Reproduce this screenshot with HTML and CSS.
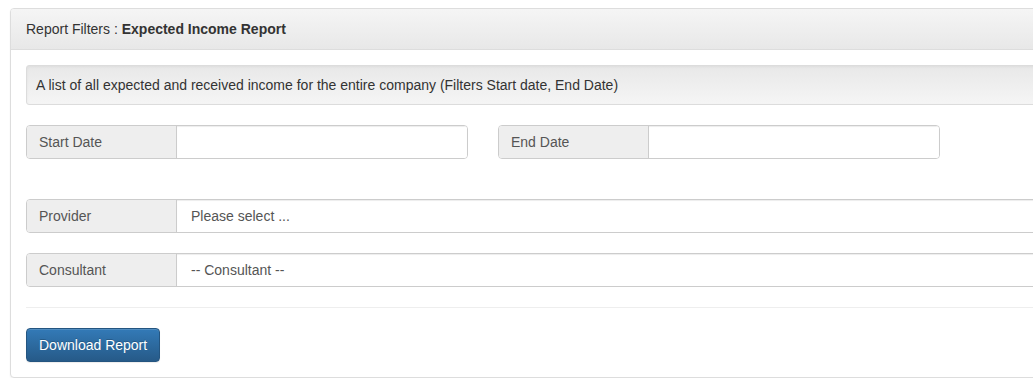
FILE: index.html
```html
<!DOCTYPE html>
<html>
<head>
<meta charset="utf-8">
<link rel="stylesheet" href="styles.css">
</head>
<body>
<div class="panel">
  <div class="panel-heading">Report Filters : <strong>Expected Income Report</strong></div>
  <div class="panel-body">
    <div class="well">A list of all expected and received income for the entire company (Filters Start date, End Date)</div>
    <div class="row">
      <div class="col">
        <div class="input-group">
          <span class="addon">Start Date</span>
          <span class="control"></span>
        </div>
      </div>
      <div class="col">
        <div class="input-group">
          <span class="addon">End Date</span>
          <span class="control"></span>
        </div>
      </div>
    </div>
    <div class="input-group full">
      <span class="addon">Provider</span>
      <span class="control">Please select ...</span>
    </div>
    <div class="input-group full">
      <span class="addon">Consultant</span>
      <span class="control">-- Consultant --</span>
    </div>
    <hr class="divider">
    <button class="btn-primary">Download Report</button>
  </div>
</div>
</body>
</html>
```

FILE: styles.css
```css
html, body {
  margin: 0;
  padding: 0;
  overflow: hidden;
}
body {
  padding: 8px 0 0 10px;
  font-family: "Liberation Sans", Arial, sans-serif;
  font-size: 14px;
  line-height: 20px;
  color: #333;
  background: #fff;
}
.panel {
  width: 1165px;
  border: 1px solid #ddd;
  border-radius: 4px;
  box-shadow: 0 1px 2px rgba(0,0,0,0.05);
  background: #fff;
}
.panel-heading {
  padding: 10px 15px;
  border-bottom: 1px solid #ddd;
  border-radius: 3px 3px 0 0;
  background-image: linear-gradient(to bottom, #f5f5f5 0%, #e8e8e8 100%);
  color: #333;
}
.panel-heading strong {
  font-weight: bold;
}
.panel-body {
  padding: 15px;
}
.well {
  padding: 9px;
  border: 1px solid #dcdcdc;
  border-radius: 3px;
  background-image: linear-gradient(to bottom, #e8e8e8 0%, #f5f5f5 100%);
  box-shadow: inset 0 1px 3px rgba(0,0,0,0.05), 0 1px 0 rgba(255,255,255,0.1);
  margin-bottom: 20px;
}
.row {
  display: flex;
  gap: 30px;
  margin-bottom: 40px;
}
.col {
  width: 442px;
}
.input-group {
  display: flex;
  height: 34px;
  box-sizing: border-box;
  border: 1px solid #ccc;
  border-radius: 4px;
  overflow: hidden;
}
.input-group.full {
  margin-bottom: 20px;
}
.addon {
  width: 150px;
  flex: none;
  box-sizing: border-box;
  padding: 6px 12px;
  background: #eee;
  border-right: 1px solid #ccc;
  color: #555;
}
.control {
  flex: 1;
  padding: 6px 14px;
  color: #555;
  background: #fff;
  box-shadow: inset 0 1px 1px rgba(0,0,0,0.075);
}
.divider {
  border: 0;
  border-top: 1px solid #eee;
  margin: 0 0 20px;
}
.btn-primary {
  font-family: "Liberation Sans", Arial, sans-serif;
  font-size: 14px;
  line-height: 20px;
  height: 34px;
  padding: 6px 12px;
  color: #fff;
  border: 1px solid #245580;
  border-radius: 4px;
  background-image: linear-gradient(to bottom, #337ab7 0%, #265a88 100%);
  box-shadow: inset 0 1px 0 rgba(255,255,255,0.15), 0 1px 1px rgba(0,0,0,0.075);
  text-shadow: 0 -1px 0 rgba(0,0,0,0.2);
  display: block;
}
```
